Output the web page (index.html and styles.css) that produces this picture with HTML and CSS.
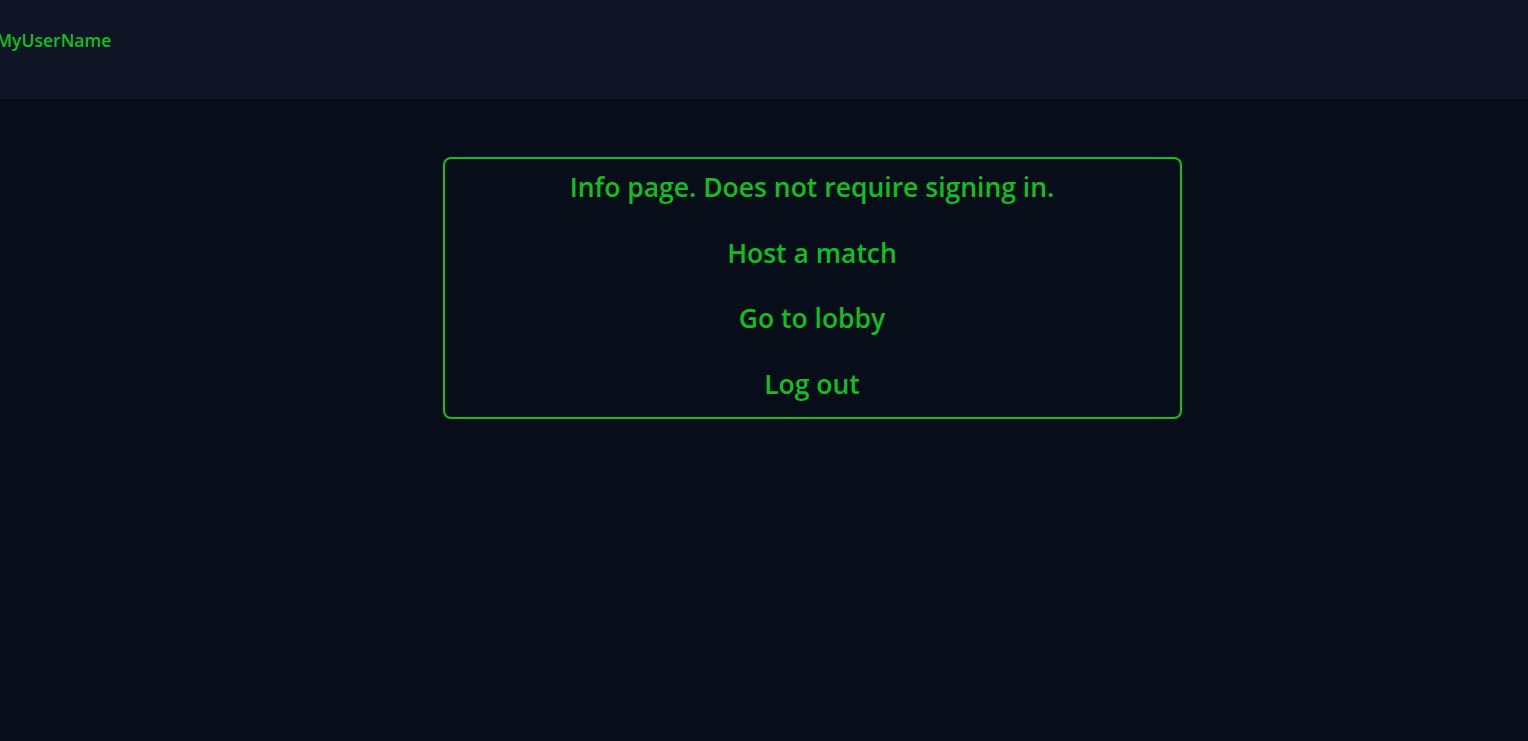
FILE: index.html
```html
<!DOCTYPE html>
<html lang="en">
<head>
<meta charset="utf-8">
<title>Info</title>
<link rel="stylesheet" href="styles.css">
</head>
<body>
<header class="topbar">
  <span class="username">MyUserName</span>
</header>
<main class="main">
  <div class="spacer"></div>
  <div class="center">
    <section class="panel">
      <p class="line">Info page. Does not require signing in.</p>
      <a class="line link" href="#">Host a match</a>
      <a class="line link" href="#">Go to lobby</a>
      <a class="line link" href="#">Log out</a>
    </section>
  </div>
</main>
</body>
</html>
```
FILE: styles.css
```css
html, body {
  margin: 0;
  padding: 0;
  height: 100%;
}
body {
  background: #080e19;
  font-family: "Open Sans", "Noto Sans", sans-serif;
  color: #10bf22;
}
.topbar {
  height: 99px;
  background: #0f1524;
  display: flex;
  align-items: center;
  padding-bottom: 20px;
  box-sizing: border-box;
}
.username {
  margin-left: -4px;
  font-size: 17.5px;
  font-weight: 600;
}
.main {
  display: grid;
  grid-template-columns: 96px 1fr;
  padding-top: 58px;
}
.center {
  display: flex;
  justify-content: center;
}
.panel {
  width: 739px;
  box-sizing: border-box;
  border: 2px solid #10bf22;
  border-radius: 8px;
  display: flex;
  flex-direction: column;
  align-items: center;
  gap: 29.5px;
  padding: 10px 0 15.5px;
}
.line {
  margin: 0;
  font-size: 26.5px;
  font-weight: 600;
  line-height: 36px;
  color: #10bf22;
  text-decoration: none;
}
```
